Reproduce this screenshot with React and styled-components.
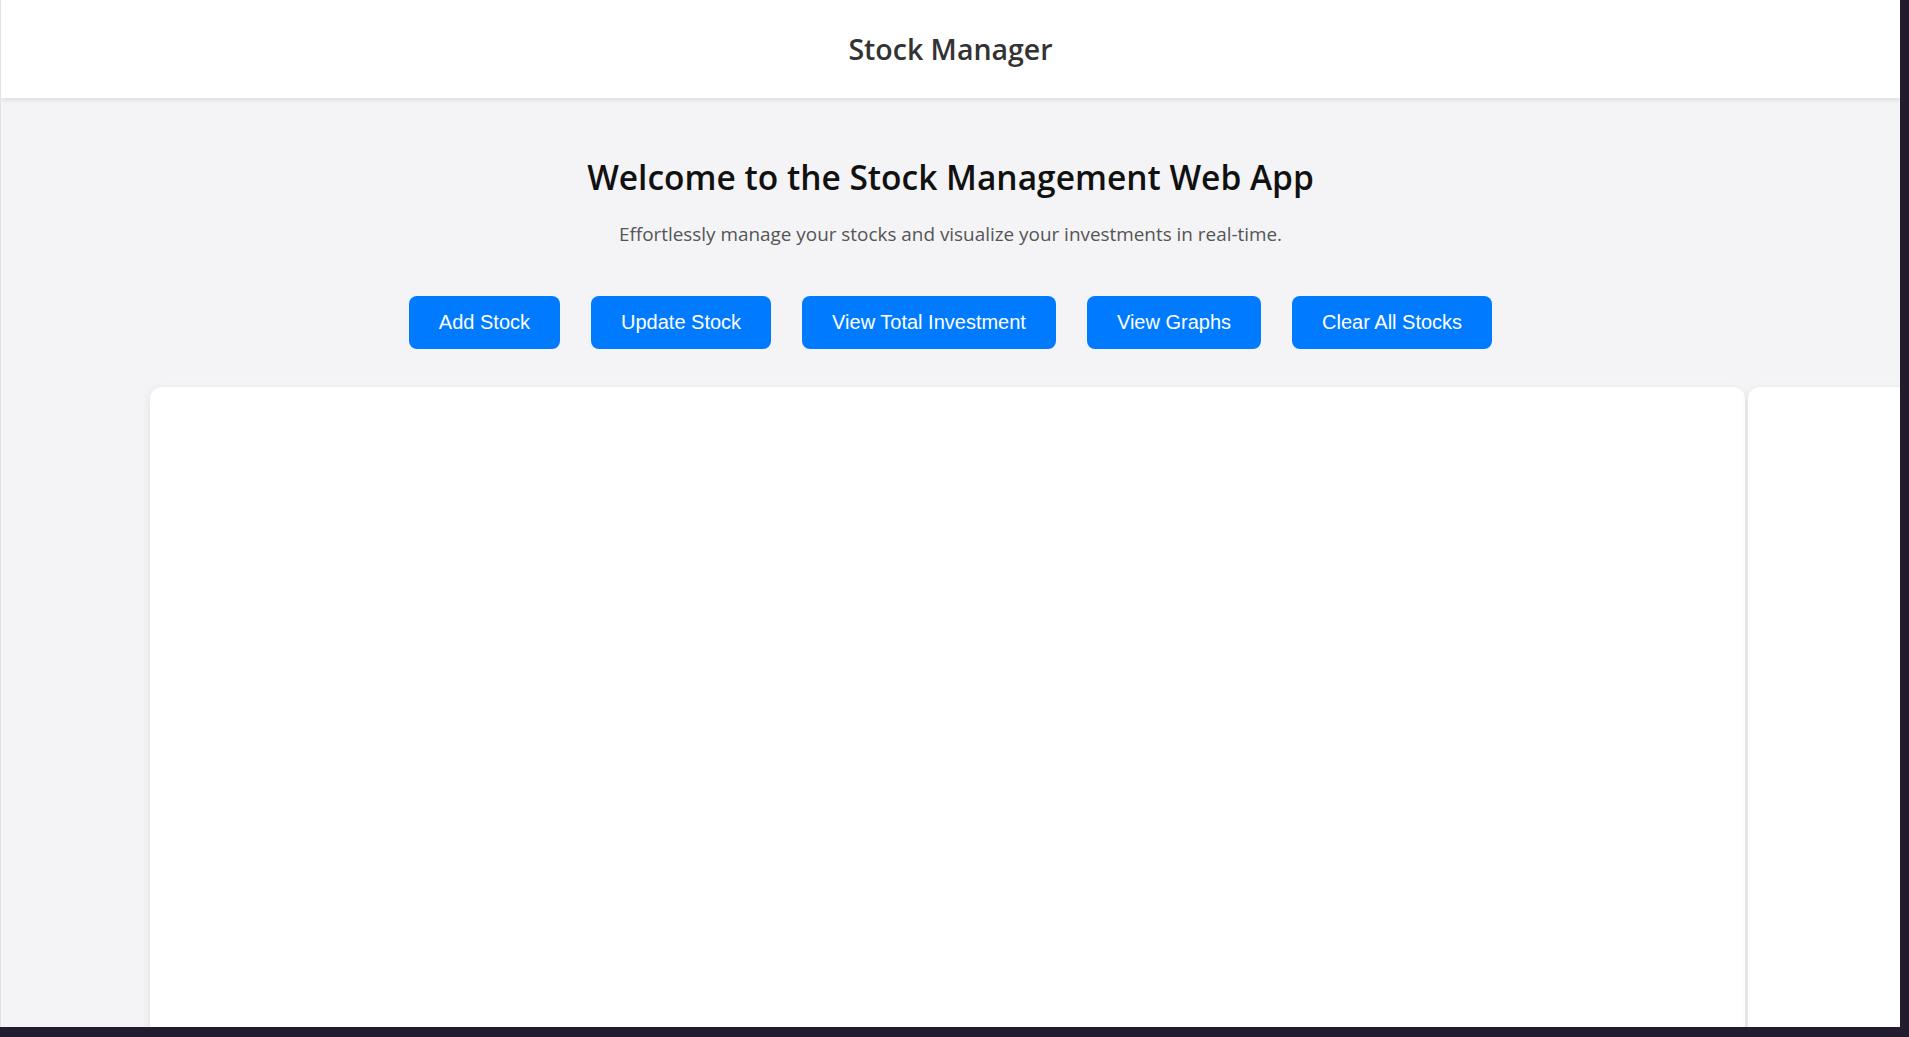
import React from "react";
import styled, { createGlobalStyle } from "styled-components";

const Global = createGlobalStyle`
  html, body { margin: 0; padding: 0; background: #231c2f; overflow: hidden; }
  #root { width: 1909px; height: 1037px; }
`;

const Frame = styled.div`
  width: 1900px;
  height: 1027px;
  background: #f4f4f6;
  overflow: hidden;
  display: flex;
  flex-direction: column;
  border-left: 1px solid #e2e2e6;
  box-sizing: border-box;
  font-family: "Open Sans", "Noto Sans", sans-serif;
`;

const Header = styled.header`
  height: 98px;
  flex: 0 0 98px;
  background: #ffffff;
  box-shadow: 0 2px 5px rgba(0, 0, 0, 0.1);
  display: flex;
  align-items: center;
  justify-content: center;
  position: relative;
  z-index: 1;
`;

const Brand = styled.h2`
  margin: 0;
  font-size: 28.5px;
  font-weight: 600;
  color: #333333;
`;

const Main = styled.main`
  display: flex;
  flex-direction: column;
  align-items: center;
  padding-top: 58px;
`;

const Title = styled.h1`
  margin: 0;
  font-size: 33.5px;
  line-height: 42px;
  font-weight: 600;
  color: #111111;
`;

const Subtitle = styled.p`
  margin: 24px 0 0;
  font-size: 18.9px;
  line-height: 24px;
  color: #555555;
`;

const Actions = styled.div`
  display: flex;
  gap: 31px;
  margin-top: 50px;
`;

const Button = styled.button`
  font-family: "Liberation Sans", Arial, sans-serif;
  font-size: 20px;
  line-height: 23px;
  padding: 15px 30px;
  border: none;
  border-radius: 8px;
  background: #007bff;
  color: #ffffff;
  cursor: pointer;
`;

const Track = styled.div`
  align-self: stretch;
  display: flex;
  gap: 3px;
  padding-left: 149px;
  margin-top: 38px;
`;

const Card = styled.div`
  flex: 0 0 1595px;
  height: 700px;
  background: #ffffff;
  border-radius: 12px;
  box-shadow: 0 2px 8px rgba(0, 0, 0, 0.08);
`;

export default function App() {
  return (
    <>
      <Global />
      <Frame>
        <Header>
          <Brand>Stock Manager</Brand>
        </Header>
        <Main>
          <Title>Welcome to the Stock Management Web App</Title>
          <Subtitle>
            Effortlessly manage your stocks and visualize your investments in real-time.
          </Subtitle>
          <Actions>
            <Button>Add Stock</Button>
            <Button>Update Stock</Button>
            <Button>View Total Investment</Button>
            <Button>View Graphs</Button>
            <Button>Clear All Stocks</Button>
          </Actions>
          <Track>
            <Card />
            <Card />
          </Track>
        </Main>
      </Frame>
    </>
  );
}
